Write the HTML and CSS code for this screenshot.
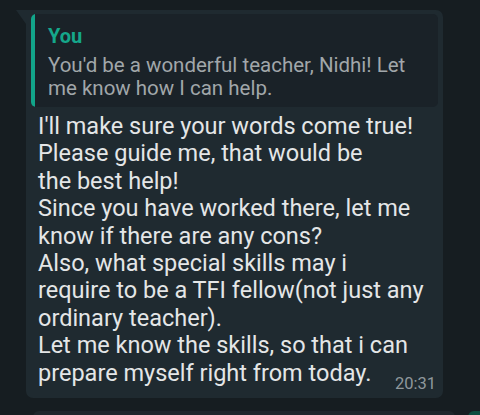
FILE: index.html
```html
<!DOCTYPE html>
<html>
<head>
<meta charset="utf-8">
<link rel="stylesheet" href="styles.css">
</head>
<body>
<div class="chat">
  <div class="bubble">
    <div class="quote">
      <div class="bar"></div>
      <div class="quote-body">
        <div class="author">You</div>
        <div class="quote-text">You'd be a wonderful teacher, Nidhi! Let<br>me know how I can help.</div>
      </div>
    </div>
    <div class="message">
      <div class="line">I'll make sure your words come true!</div>
      <div class="line">Please guide me, that would be</div>
      <div class="line">the best help!</div>
      <div class="line">Since you have worked there, let me</div>
      <div class="line">know if there are any cons?</div>
      <div class="line">Also, what special skills may i</div>
      <div class="line">require to be a TFI fellow(not just any</div>
      <div class="line">ordinary teacher).</div>
      <div class="line">Let me know the skills, so that i can</div>
      <div class="line last"><span>prepare myself right from today.</span><span class="time">20:31</span></div>
    </div>
  </div>
  <div class="next-row">
    <div class="next-bubble"></div>
    <div class="next-green"></div>
  </div>
</div>
</body>
</html>
```
FILE: styles.css
```css
html, body {
  margin: 0;
  padding: 0;
  background: #161d21;
  font-family: Roboto, "Noto Sans", sans-serif;
  overflow: hidden;
}
.chat {
  padding-top: 10px;
  display: flex;
  flex-direction: column;
}
.bubble {
  position: relative;
  margin-left: 26px;
  width: 417px;
  box-sizing: border-box;
  background: #1f2a30;
  border-radius: 0 7px 7px 7px;
  padding: 4px 5px 6px 5px;
}
.bubble::before {
  content: "";
  position: absolute;
  left: -10px;
  top: 0;
  width: 0;
  height: 0;
  border-top: 14px solid #1f2a30;
  border-left: 10px solid transparent;
}
.quote {
  display: flex;
  height: 93px;
  background: #1a2228;
  border-radius: 5px;
  overflow: hidden;
}
.bar {
  width: 4px;
  background: #12a58a;
  border-radius: 2px 0 0 2px;
  flex: none;
}
.quote-body {
  padding: 10px 0 0 13px;
}
.author {
  color: #15a78b;
  font-weight: 700;
  font-size: 20px;
  line-height: 24px;
}
.quote-text {
  color: #a1a7aa;
  font-size: 20.5px;
  line-height: 23px;
  margin-top: 5.5px;
  white-space: nowrap;
}
.message {
  padding: 6px 0 0 7px;
  color: #e4e6e7;
  font-size: 23.5px;
  line-height: 27.4px;
}
.line {
  white-space: nowrap;
}
.last {
  display: flex;
  align-items: flex-start;
}
.time {
  margin-left: auto;
  margin-right: 2px;
  margin-top: 16.8px;
  font-size: 16.5px;
  line-height: 16px;
  color: #8f989c;
}
.next-row {
  display: flex;
  margin-top: 13px;
}
.next-bubble {
  margin-left: 33px;
  width: 422px;
  height: 10px;
  background: #1e262b;
  border-radius: 6px 6px 0 0;
}
.next-green {
  margin-left: 13px;
  width: 12px;
  height: 10px;
  background: #0d4d40;
  border-radius: 6px 0 0 0;
}
```
